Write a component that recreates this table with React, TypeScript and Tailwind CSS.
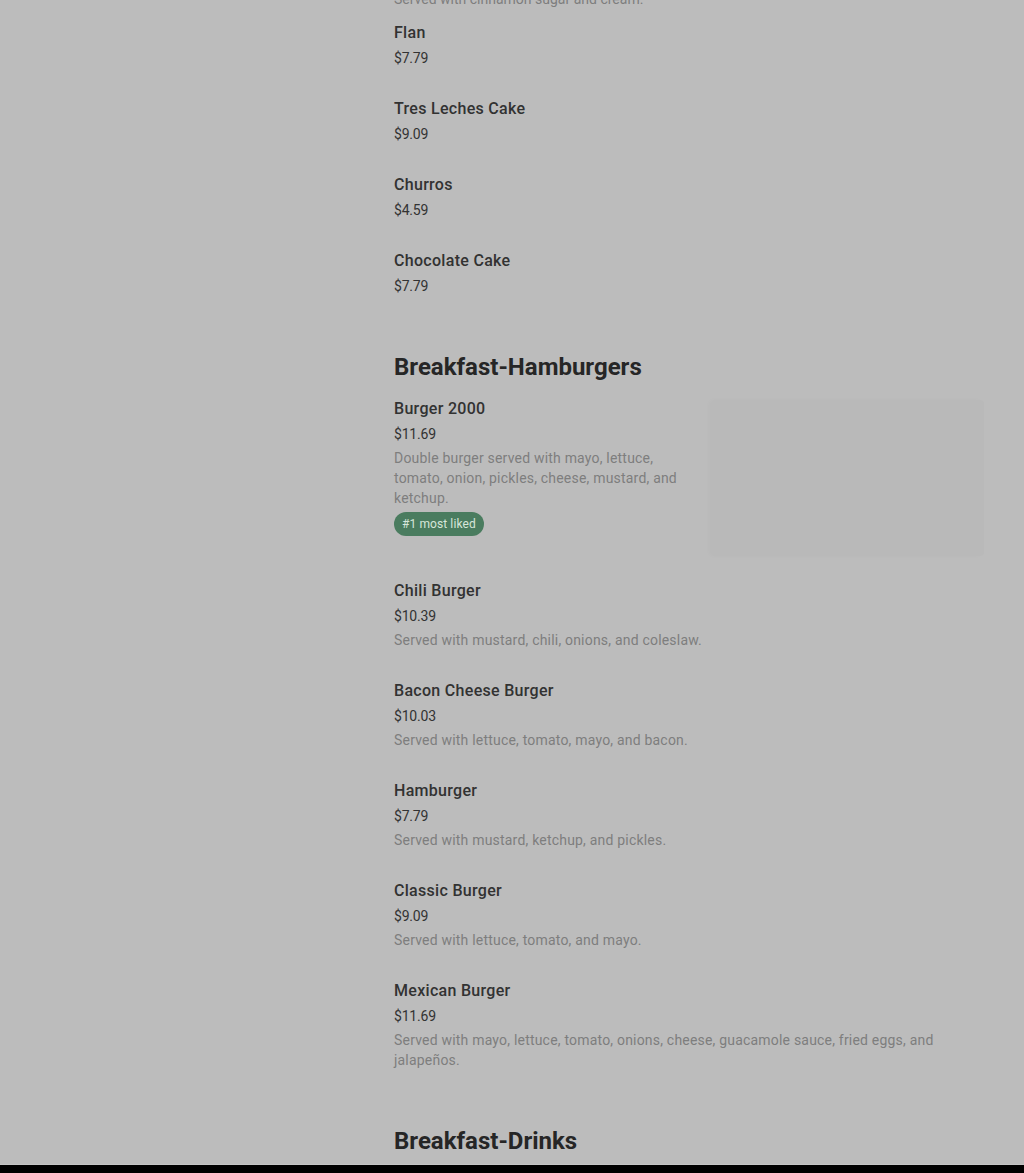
import React from 'react';

interface MenuItem {
  name: string;
  price: string;
  description?: string;
  badge?: string;
  image?: boolean;
}

interface Section {
  title?: string;
  items: MenuItem[];
}

const sections: Section[] = [
  {
    items: [
      { name: 'Flan', price: '$7.79' },
      { name: 'Tres Leches Cake', price: '$9.09' },
      { name: 'Churros', price: '$4.59' },
      { name: 'Chocolate Cake', price: '$7.79' },
    ],
  },
  {
    title: 'Breakfast-Hamburgers',
    items: [
      {
        name: 'Burger 2000',
        price: '$11.69',
        description: 'Double burger served with mayo, lettuce, tomato, onion, pickles, cheese, mustard, and ketchup.',
        badge: '#1 most liked',
        image: true,
      },
      { name: 'Chili Burger', price: '$10.39', description: 'Served with mustard, chili, onions, and coleslaw.' },
      { name: 'Bacon Cheese Burger', price: '$10.03', description: 'Served with lettuce, tomato, mayo, and bacon.' },
      { name: 'Hamburger', price: '$7.79', description: 'Served with mustard, ketchup, and pickles.' },
      { name: 'Classic Burger', price: '$9.09', description: 'Served with lettuce, tomato, and mayo.' },
      {
        name: 'Mexican Burger',
        price: '$11.69',
        description: 'Served with mayo, lettuce, tomato, onions, cheese, guacamole sauce, fried eggs, and jalapeños.',
      },
    ],
  },
  { title: 'Breakfast-Drinks', items: [] },
];

function ItemRow({ item }: { item: MenuItem }) {
  const text = (
    <div className={item.image ? 'w-[302px]' : ''}>
      <div className="text-base leading-6 font-medium tracking-[0.3px] text-[#323232]">{item.name}</div>
      <div className="mt-[3px] text-sm leading-5 tracking-[-0.2px] text-[#333333]">{item.price}</div>
      {item.description && (
        <p className="mt-1 text-sm leading-5 tracking-[0.2px] text-[#7e7e7e]">{item.description}</p>
      )}
      {item.badge && (
        <span className="mt-1 inline-flex h-6 items-center rounded-full bg-[#4a7c5f] px-2 text-xs tracking-[0.1px] text-[#d6e6da]">
          {item.badge}
        </span>
      )}
    </div>
  );

  if (item.image) {
    return (
      <li className="flex items-start justify-between pb-[23px]">
        {text}
        {/* photo still loading, just the grey box */}
        <div className="mt-[3px] h-[156px] w-[272px] rounded-sm bg-[#b9b9b9] shadow-[-3px_0_4px_rgba(0,0,0,0.02)]" />
      </li>
    );
  }
  return <li className="pb-[29px]">{text}</li>;
}

export default function App() {
  return (
    <div className="flex h-[1173px] flex-col overflow-hidden bg-[#bcbcbc] font-['Roboto',sans-serif]">
      <div className="flex flex-1 overflow-hidden">
        <aside className="w-[394px] shrink-0" />
        <main className="w-[590px]">
          {/* tail of the item above, cut by the scroll */}
          <p className="mt-[-11px] mb-3 text-sm leading-5 text-[#7e7e7e]">Served with cinnamon sugar and cream.</p>
          {sections.map((s, i) => (
            <section key={i}>
              {s.title && (
                <h2 className="mt-[26px] mb-[14px] text-2xl leading-8 font-bold tracking-[0px] text-[#262626]">
                  {s.title}
                </h2>
              )}
              <ul>
                {s.items.map(item => (
                  <ItemRow key={item.name} item={item} />
                ))}
              </ul>
            </section>
          ))}
        </main>
      </div>
      <div className="h-[9px] shrink-0 border-t border-[#c4c4c4] bg-black" />
    </div>
  );
}
